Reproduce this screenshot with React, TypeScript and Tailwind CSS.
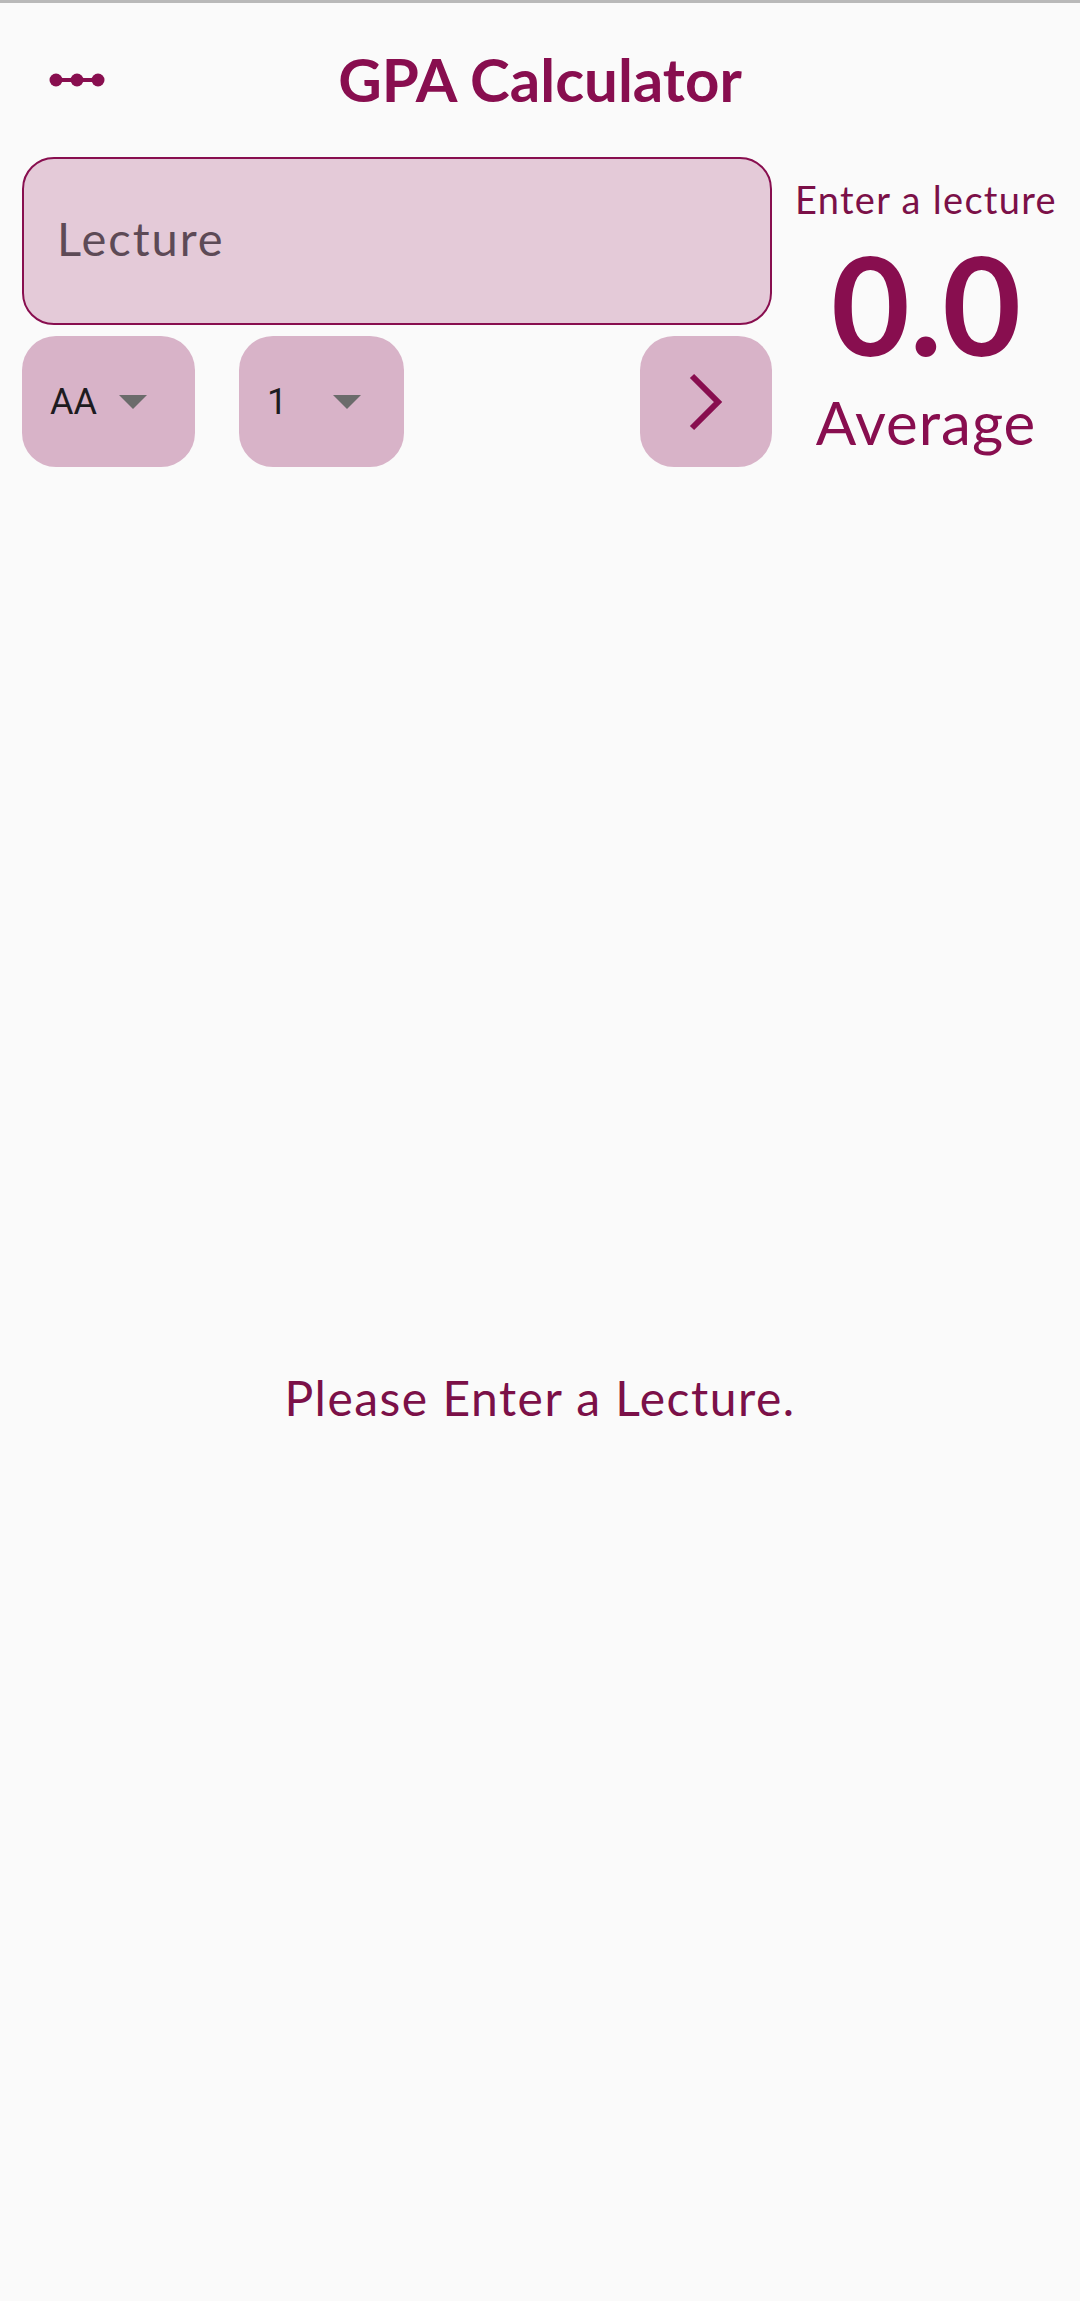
import React from "react";

const Q = { fontFamily: "Lato, 'Noto Sans', sans-serif" };
const R = { fontFamily: "Roboto, 'Noto Sans', sans-serif" };

function MenuIcon() {
  return (
    <svg width="58" height="16" viewBox="0 0 58 16" fill="none">
      <line x1="7" y1="8" x2="51" y2="8" stroke="#880e4f" strokeWidth="4" />
      <circle cx="7" cy="8" r="6.5" fill="#880e4f" />
      <circle cx="28" cy="8" r="6.5" fill="#880e4f" />
      <circle cx="49" cy="8" r="6.5" fill="#880e4f" />
    </svg>
  );
}

function Triangle() {
  return (
    <svg width="28" height="14" viewBox="0 0 28 14">
      <polygon points="0,0 28,0 14,14" fill="#6b6b6b" />
    </svg>
  );
}

function Dropdown({ value, w, gap }: { value: string; w: string; gap: string }) {
  return (
    <div className={`${w} h-[131px] rounded-[34px] bg-[#d8b3c8] flex items-center pl-[28px]`}>
      <span style={R} className="text-[36px] leading-none text-[#1d1b20]">
        {value}
      </span>
      <span className={gap}>
        <Triangle />
      </span>
    </div>
  );
}

export default function App() {
  return (
    <div className="w-[1080px] min-h-[2301px] bg-[#fafafa] flex flex-col">
      <div className="h-[3px] bg-[#b9b9b9]" />
      <header className="h-[154px] grid grid-cols-[1fr_auto_1fr] items-center">
        <div className="pl-[49px] flex items-center">
          <MenuIcon />
        </div>
        <h1 style={Q} className="text-[60px] font-bold text-[#880e4f] leading-none pb-[2px]">
          GPA Calculator
        </h1>
        <div />
      </header>

      <section className="flex pl-[22px]">
        <div className="w-[750px] flex flex-col gap-[11px]">
          <div className="h-[168px] rounded-[32px] border-2 border-[#880e4f] bg-[#e4cad8] flex items-center pl-[33px] pb-[6px]">
            <span style={Q} className="text-[47px] tracking-[2px] text-[#5d4a56] leading-none">
              Lecture
            </span>
          </div>
          <div className="flex items-center">
            <Dropdown value="AA" w="w-[173px]" gap="ml-[22px]" />
            <div className="w-[44px]" />
            <Dropdown value="1" w="w-[165px]" gap="ml-[46px]" />
            <div className="flex-1" />
            <button className="w-[132px] h-[131px] rounded-[34px] bg-[#d8b3c8] flex items-center justify-center">
              <svg width="40" height="60" viewBox="0 0 40 60" fill="none">
                <polyline
                  points="6,4 32,30 6,56"
                  stroke="#880e4f"
                  strokeWidth="6"
                  strokeLinecap="butt"
                  strokeLinejoin="miter"
                />
              </svg>
            </button>
          </div>
        </div>
        <div className="flex-1 flex flex-col items-center pt-[23px]">
          <div style={Q} className="text-[38px] tracking-[1.3px] leading-none text-[#7b1048]">
            Enter a lecture
          </div>
          <div style={Q} className="text-[136px] font-bold leading-none text-[#880e4f] mt-[18px]">
            0.0
          </div>
          <div style={Q} className="text-[60px] tracking-[1px] leading-none text-[#880e4f] mt-[20px]">
            Average
          </div>
        </div>
      </section>

      <div className="flex-1 flex items-center justify-center">
        <p style={Q} className="text-[48px] tracking-[1.5px] text-[#7b1048] leading-none mt-[28px]">
          Please Enter a Lecture.
        </p>
      </div>
    </div>
  );
}
